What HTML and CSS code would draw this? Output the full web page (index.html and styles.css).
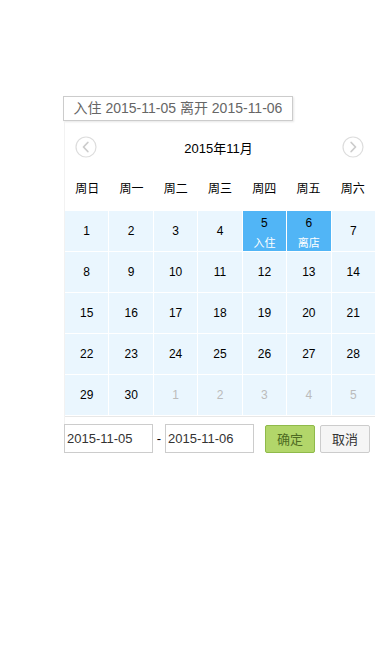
FILE: index.html
```html
<!DOCTYPE html>
<html lang="zh-CN">
<head>
    <meta charset="UTF-8">
    <meta name="viewport" content="width=device-width, initial-scale=1.0">
    <title>选择日期</title>
    <link rel="stylesheet" href="styles.css">
</head>
<body>
    <div class="page">
        <div class="trigger">入住 2015-11-05 离开 2015-11-06</div>
        <div class="calendar">
            <div class="cal-head">
                <span class="arrow">
                    <svg width="22" height="22" viewBox="0 0 22 22"><circle cx="11" cy="11" r="10" fill="none" stroke="#ddd" stroke-width="1.2"/><path d="M12.8 6.5 L8.5 11 L12.8 15.5" fill="none" stroke="#ccc" stroke-width="1.8" stroke-linecap="round" stroke-linejoin="round"/></svg>
                </span>
                <span class="title">2015年11月</span>
                <span class="arrow">
                    <svg width="22" height="22" viewBox="0 0 22 22"><circle cx="11" cy="11" r="10" fill="none" stroke="#ddd" stroke-width="1.2"/><path d="M9.2 6.5 L13.5 11 L9.2 15.5" fill="none" stroke="#ccc" stroke-width="1.8" stroke-linecap="round" stroke-linejoin="round"/></svg>
                </span>
            </div>
            <div class="week">
                <span>周日</span><span>周一</span><span>周二</span><span>周三</span><span>周四</span><span>周五</span><span>周六</span>
            </div>
            <div class="days">
                <div class="day">1</div>
                <div class="day">2</div>
                <div class="day">3</div>
                <div class="day">4</div>
                <div class="day active"><span>5</span><em>入住</em></div>
                <div class="day active"><span>6</span><em>离店</em></div>
                <div class="day">7</div>
                <div class="day">8</div>
                <div class="day">9</div>
                <div class="day">10</div>
                <div class="day">11</div>
                <div class="day">12</div>
                <div class="day">13</div>
                <div class="day">14</div>
                <div class="day">15</div>
                <div class="day">16</div>
                <div class="day">17</div>
                <div class="day">18</div>
                <div class="day">19</div>
                <div class="day">20</div>
                <div class="day">21</div>
                <div class="day">22</div>
                <div class="day">23</div>
                <div class="day">24</div>
                <div class="day">25</div>
                <div class="day">26</div>
                <div class="day">27</div>
                <div class="day">28</div>
                <div class="day">29</div>
                <div class="day">30</div>
                <div class="day other">1</div>
                <div class="day other">2</div>
                <div class="day other">3</div>
                <div class="day other">4</div>
                <div class="day other">5</div>
            </div>
            <div class="cal-foot">
                <input type="text" class="date-input" value="2015-11-05">
                <span class="dash">-</span>
                <input type="text" class="date-input" value="2015-11-06">
                <button class="btn btn-ok">确定</button>
                <button class="btn btn-cancel">取消</button>
            </div>
        </div>
    </div>
</body>
</html>
```

FILE: styles.css
```css
body {
    margin: 0;
    font-family: "Liberation Sans", "Noto Sans CJK SC", sans-serif;
    background: #ffffff;
    color: #000;
    overflow: hidden;
}
.page {
    padding: 96px 0 0 63px;
}
.trigger {
    width: 228px;
    height: 23px;
    line-height: 23px;
    border: 1px solid #ccc;
    box-shadow: 1px 1px 2px rgba(0, 0, 0, 0.1);
    text-align: center;
    font-size: 14px;
    color: #666;
}
.calendar {
    margin-left: 1px;
    width: 310px;
    border-left: 1px solid #f2f2f2;
}
.cal-head {
    height: 52px;
    display: flex;
    align-items: center;
    justify-content: space-between;
    padding: 0 0 0 10px;
}
.cal-head .arrow {
    width: 22px;
    height: 22px;
    display: flex;
}
.cal-head .arrow:last-child {
    margin-right: 11px;
}
.cal-head .title {
    font-size: 13px;
    margin-left: -2px;
}
.week {
    display: grid;
    grid-template-columns: repeat(7, 1fr);
    height: 28px;
    align-items: center;
    margin-bottom: 10px;
    font-size: 12px;
    text-align: center;
}
.days {
    display: grid;
    grid-template-columns: repeat(7, 1fr);
    gap: 1px;
    padding-bottom: 1px;
    border-bottom: 1px solid #e8e8e8;
}
.day {
    height: 40px;
    background: #eaf6fe;
    display: flex;
    flex-direction: column;
    align-items: center;
    justify-content: center;
    font-size: 12px;
}
.day.other {
    color: #bbb;
}
.day.active {
    background: #51b5f6;
    justify-content: flex-start;
    padding-top: 5px;
    height: 35px;
}
.day.active em {
    font-style: normal;
    font-size: 11px;
    color: #fff;
    margin-top: 4px;
}
.cal-foot {
    display: flex;
    align-items: center;
    padding-top: 7px;
    margin-left: -1px;
}
.date-input {
    width: 83px;
    height: 27px;
    padding: 0 2px;
    border: 1px solid #ccc;
    font-family: "Liberation Sans", sans-serif;
    font-size: 13px;
    color: #333;
    margin: 0;
}
.dash {
    width: 12px;
    text-align: center;
    font-size: 13px;
}
.btn {
    width: 50px;
    height: 28px;
    font-family: "Liberation Sans", "Noto Sans CJK SC", sans-serif;
    font-size: 13px;
    border-radius: 2px;
    padding: 0;
    cursor: pointer;
}
.btn-ok {
    margin-left: 11px;
    background: #b2d66a;
    border: 1px solid #8fba4a;
    color: #4e6b22;
}
.btn-cancel {
    margin-left: 5px;
    background: #f5f5f5;
    border: 1px solid #ccc;
    color: #333;
}
```
